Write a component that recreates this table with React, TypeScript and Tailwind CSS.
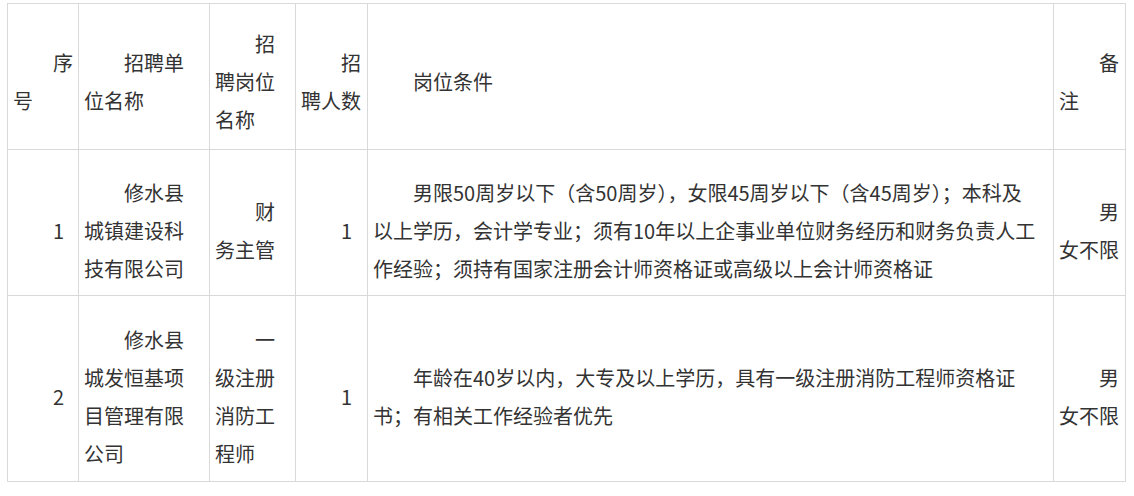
const rows = [
  {
    no: "1",
    unit: "修水县城镇建设科技有限公司",
    post: "财务主管",
    count: "1",
    cond: "男限50周岁以下（含50周岁），女限45周岁以下（含45周岁）；本科及以上学历，会计学专业；须有10年以上企事业单位财务经历和财务负责人工作经验；须持有国家注册会计师资格证或高级以上会计师资格证",
    note: "男女不限",
    h: "h-[146px]",
  },
  {
    no: "2",
    unit: "修水县城发恒基项目管理有限公司",
    post: "一级注册消防工程师",
    count: "1",
    cond: "年龄在40岁以内，大专及以上学历，具有一级注册消防工程师资格证书；有相关工作经验者优先",
    note: "男女不限",
    h: "h-[186px]",
  },
];

const base = "border border-[#d9d9d9] pl-[5px] align-middle indent-[2em] break-all";
const body = base + " pt-[20px] pb-[4px]";
const head = base + " pt-[14px] pb-[4px]";

export default function App() {
  return (
    <div
      className="bg-white w-[1134px] h-[496px] pt-[3px] pl-[7px] text-[20px] leading-[38px] text-[#333333]"
      style={{ fontFamily: '"Noto Sans CJK SC", "Noto Sans", sans-serif' }}
    >
      <table className="table-fixed border-collapse w-[1118px]">
        <colgroup>
          <col className="w-[71px]" />
          <col className="w-[131px]" />
          <col className="w-[86px]" />
          <col className="w-[72px]" />
          <col className="w-[686px]" />
          <col className="w-[72px]" />
        </colgroup>
        <tbody>
          <tr className="h-[146px]">
            <td className={head + " pr-[5px]"}>序号</td>
            <td className={head + " pr-[14px]"}>招聘单位名称</td>
            <td className={head + " pr-[5px]"}>招聘岗位名称</td>
            <td className={head + " pr-[5px]"}>招聘人数</td>
            <td className={head + " pr-[14px]"}>岗位条件</td>
            <td className={head + " pr-[5px]"}>备注</td>
          </tr>
          {rows.map((r) => (
            <tr key={r.no} className={r.h}>
              <td className={body + " pr-[5px]"}>{r.no}</td>
              <td className={body + " pr-[14px]"}>{r.unit}</td>
              <td className={body + " pr-[5px]"}>{r.post}</td>
              <td className={body + " pr-[5px]"}>{r.count}</td>
              <td className={body + " pr-[14px]"}>{r.cond}</td>
              <td className={body + " pr-[5px]"}>{r.note}</td>
            </tr>
          ))}
        </tbody>
      </table>
    </div>
  );
}
